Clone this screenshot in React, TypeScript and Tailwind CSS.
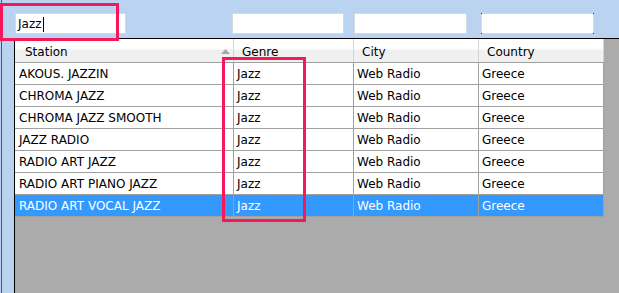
import React from "react";

const rows = [
  ["AKOUS. JAZZIN", "Jazz", "Web Radio", "Greece"],
  ["CHROMA JAZZ", "Jazz", "Web Radio", "Greece"],
  ["CHROMA JAZZ SMOOTH", "Jazz", "Web Radio", "Greece"],
  ["JAZZ RADIO", "Jazz", "Web Radio", "Greece"],
  ["RADIO ART JAZZ", "Jazz", "Web Radio", "Greece"],
  ["RADIO ART PIANO JAZZ", "Jazz", "Web Radio", "Greece"],
  ["RADIO ART VOCAL JAZZ", "Jazz", "Web Radio", "Greece"],
];

const widths = ["w-[219px]", "w-[120px]", "w-[125px]", "w-[125px]"];
const headers = ["Station", "Genre", "City", "Country"];

const App = () => {
  return (
    <div className="relative w-[619px] h-[293px] overflow-hidden bg-[#b9d3f0] flex text-[12px] text-black [font-family:'DejaVu_Sans',sans-serif]">
      <div className="w-px bg-[#b9d3f0]" />
      <div className="w-px bg-[#4c5566]" />
      <div className="flex-1 flex flex-col">
        {/* filter boxes */}
        <div className="h-[38px] flex items-start pt-[13px] pl-[13px]">
          <div className="w-[111px] h-[21px] bg-white border border-[#d4dae2] flex items-center pl-[2px] pt-px">
            <span>Jazz</span>
            <span className="w-px h-[15px] bg-black ml-px" />
          </div>
          <div className="ml-[106px] w-[112px] h-[21px] bg-white border border-[#d4dae2]" />
          <div className="ml-[10px] w-[113px] h-[21px] bg-white border border-[#d4dae2]" />
          <div className="relative ml-[14px] w-[113px] h-[21px] bg-white border border-[#d4dae2]">
            <span className="absolute -left-px -top-px w-px h-px bg-[#333]" />
            <span className="absolute -right-px -top-px w-px h-px bg-[#333]" />
            <span className="absolute -left-px -bottom-px w-px h-px bg-[#333]" />
            <span className="absolute -right-px -bottom-px w-px h-px bg-[#333]" />
          </div>
        </div>
        {/* grid */}
        <div className="flex-1 flex">
          <div className="w-[12px]" />
          <div className="flex-1 bg-[#ababab] border-t border-l border-black">
            <div className="flex h-[24px] w-[589px] border-b border-[#a0a0a0] bg-gradient-to-b from-white from-40% to-[#f0f0f0] to-50%">
              {headers.map((h, i) => (
                <div
                  key={h}
                  className={`${widths[i]} relative flex items-center pt-[2px] border-r border-[#d5d5d5] ${i === 0 ? "pl-[10px]" : "pl-[8px]"}`}
                >
                  {h}
                  {i === 0 && (
                    <svg className="absolute right-[3px] top-[10px]" width="9" height="5" viewBox="0 0 9 5">
                      <path d="M4.5 0 L9 5 L0 5 Z" fill="#a6a6a6" />
                    </svg>
                  )}
                </div>
              ))}
            </div>
            {rows.map((r, ri) => {
              const sel = ri === rows.length - 1;
              return (
                <div
                  key={r[0]}
                  className={`flex h-[22px] w-[589px] border-b border-[#a0a0a0] ${sel ? "bg-[#3399ff] text-white" : "bg-white"}`}
                >
                  {r.map((c, ci) => (
                    <div
                      key={ci}
                      className={`${widths[ci]} flex items-center pt-px border-r border-[#a0a0a0] ${ci === 0 ? "pl-[4px]" : "pl-[3px]"}`}
                    >
                      {c}
                    </div>
                  ))}
                </div>
              );
            })}
          </div>
        </div>
      </div>
      {/* annotation boxes */}
      <div className="absolute left-0 top-[3px] w-[119px] h-[38px] border-[3px] border-[#f7185c]" />
      <div className="absolute left-[222px] top-[57px] w-[84px] h-[165px] border-[3px] border-[#f7185c]" />
    </div>
  );
};

export default App;
